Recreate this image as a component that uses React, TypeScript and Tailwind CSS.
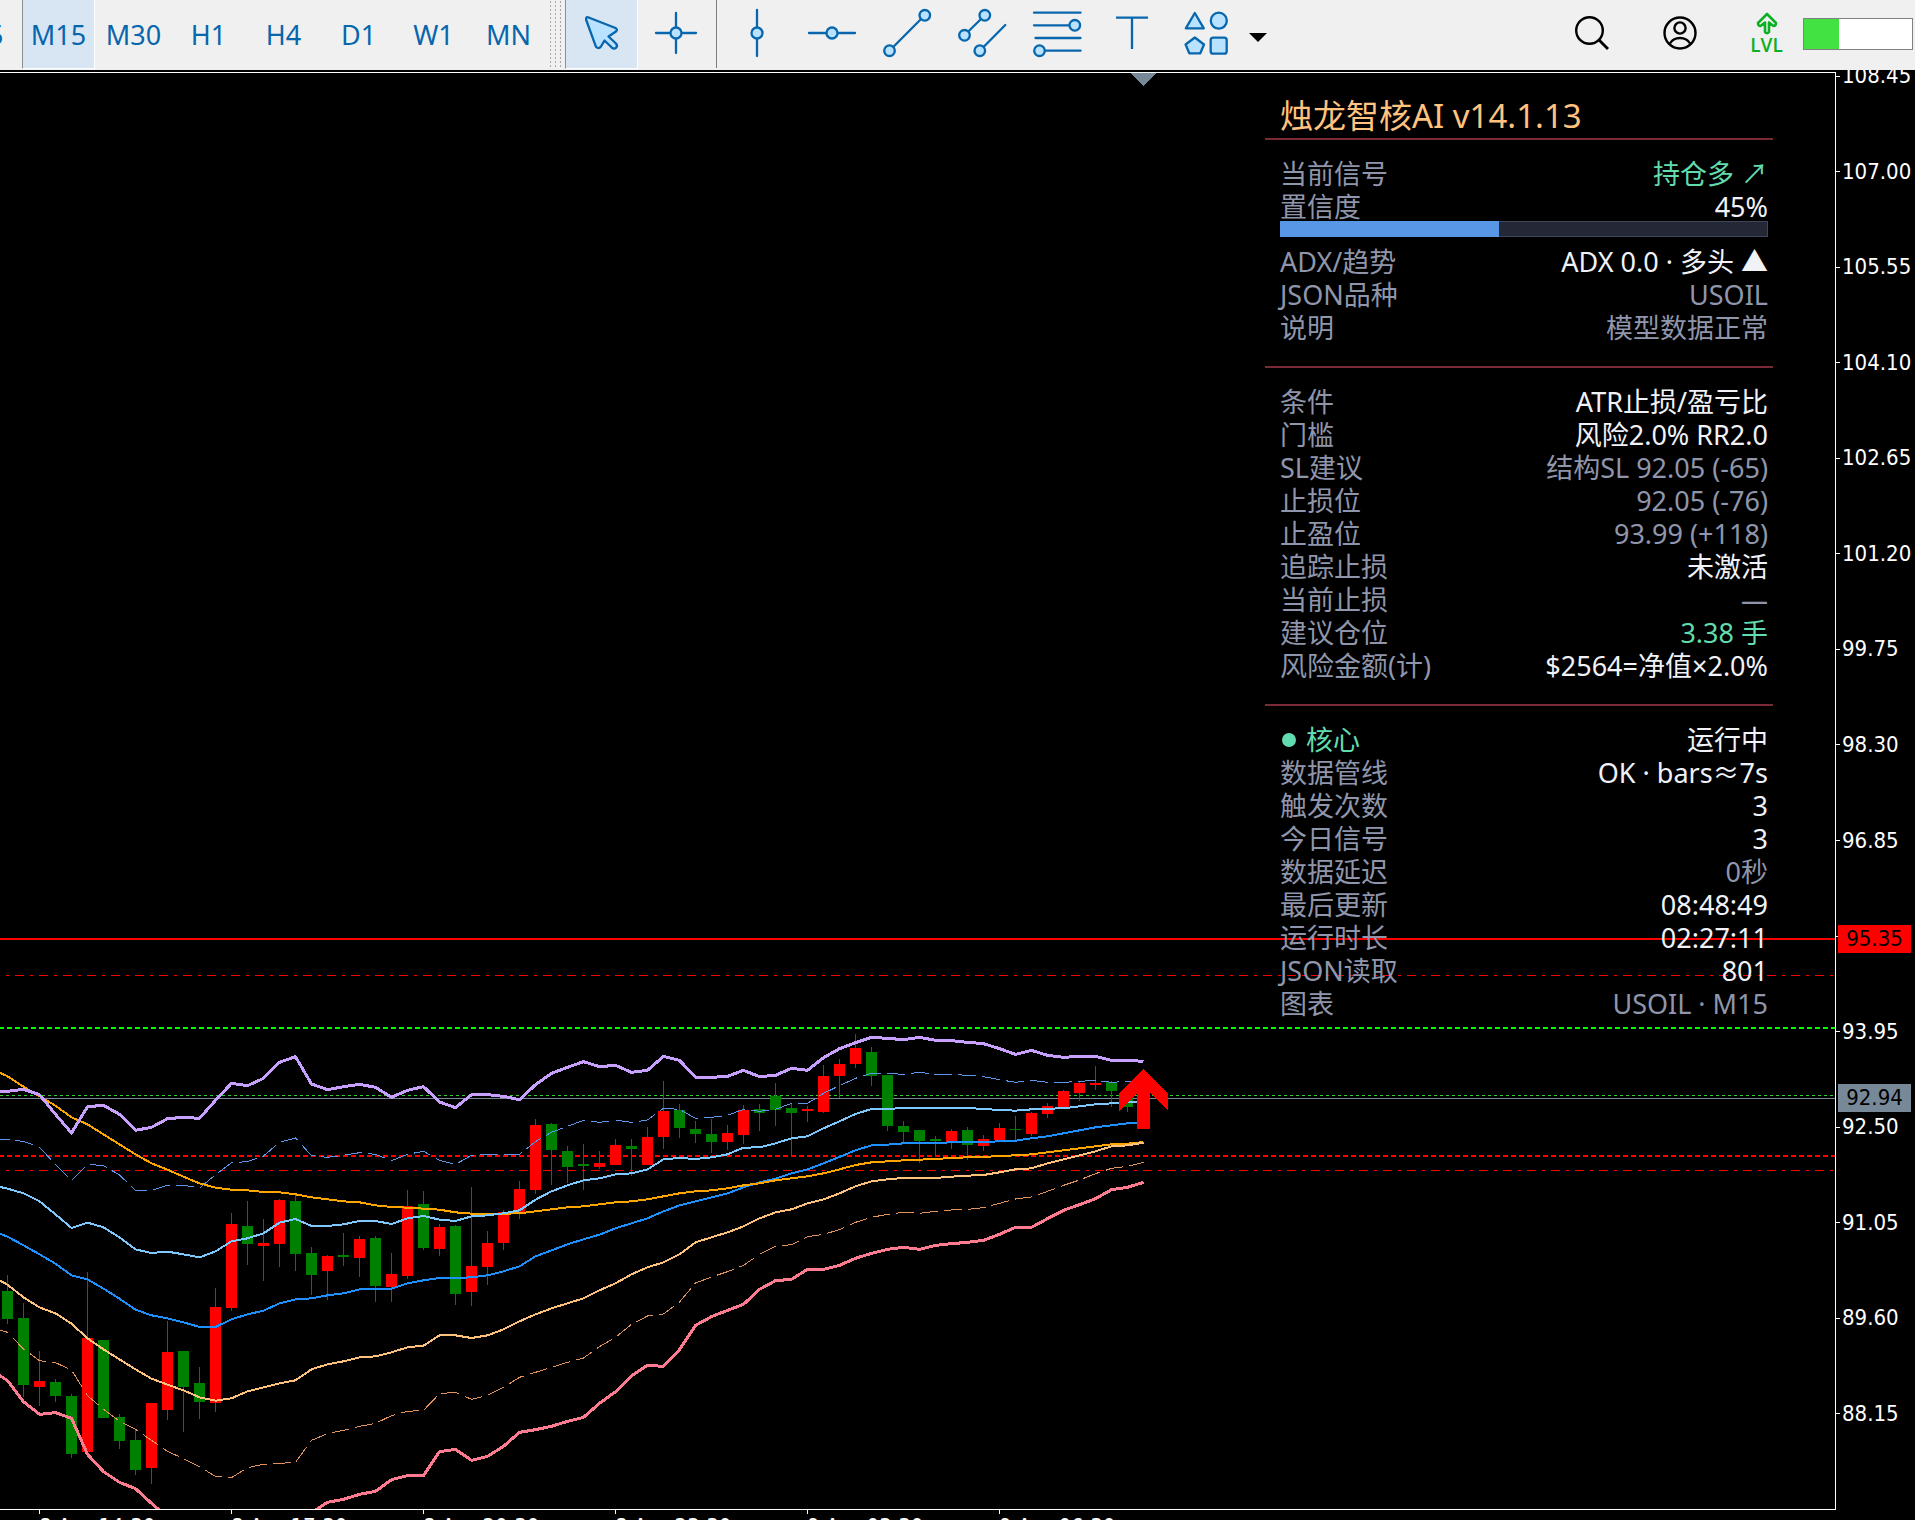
import type { ReactNode } from 'react'

const TIMEFRAMES = ['M5', 'M15', 'M30', 'H1', 'H4', 'D1', 'W1', 'MN']

// The blank entry keeps its tick, the ask price badge sits over it
const PRICES = [
  '108.45', '107.00', '105.55', '104.10', '102.65', '101.20', '99.75', '98.30',
  '96.85', '', '93.95', '92.50', '91.05', '89.60', '88.15',
]

const TIMES = ['8 Apr 14:30', '8 Apr 17:30', '8 Apr 20:30', '8 Apr 23:30', '9 Apr 03:30', '9 Apr 06:30']

type Tone = 'muted' | 'bright' | 'green'
type Row = { label: string; value: string; tone: Tone; dot?: boolean }

const TONES: Record<Tone, string> = {
  muted: 'text-[#8f96ab]',
  bright: 'text-[#f0f2f8]',
  green: 'text-[#62dcae]',
}

const SIGNAL_ROWS: Row[] = [
  { label: '当前信号', value: '持仓多 ↗', tone: 'green' },
  { label: '置信度', value: '45%', tone: 'bright' },
]

const TREND_ROWS: Row[] = [
  { label: 'ADX/趋势', value: 'ADX 0.0 · 多头 ▲', tone: 'bright' },
  { label: 'JSON品种', value: 'USOIL', tone: 'muted' },
  { label: '说明', value: '模型数据正常', tone: 'muted' },
]

const RISK_ROWS: Row[] = [
  { label: '条件', value: 'ATR止损/盈亏比', tone: 'bright' },
  { label: '门槛', value: '风险2.0% RR2.0', tone: 'bright' },
  { label: 'SL建议', value: '结构SL 92.05 (-65)', tone: 'muted' },
  { label: '止损位', value: '92.05 (-76)', tone: 'muted' },
  { label: '止盈位', value: '93.99 (+118)', tone: 'muted' },
  { label: '追踪止损', value: '未激活', tone: 'bright' },
  { label: '当前止损', value: '—', tone: 'muted' },
  { label: '建议仓位', value: '3.38 手', tone: 'green' },
  { label: '风险金额(计)', value: '$2564=净值×2.0%', tone: 'bright' },
]

const CORE_ROWS: Row[] = [
  { label: '核心', value: '运行中', tone: 'bright', dot: true },
  { label: '数据管线', value: 'OK · bars≈7s', tone: 'bright' },
  { label: '触发次数', value: '3', tone: 'bright' },
  { label: '今日信号', value: '3', tone: 'bright' },
  { label: '数据延迟', value: '0秒', tone: 'muted' },
  { label: '最后更新', value: '08:48:49', tone: 'bright' },
  { label: '运行时长', value: '02:27:11', tone: 'bright' },
  { label: 'JSON读取', value: '801', tone: 'bright' },
  { label: '图表', value: 'USOIL · M15', tone: 'muted' },
]

// Chart values are in thirds of a pixel below the 927px base line
const BASE_Y = 927
const STEP = 16
const FIRST_X = 7
const toY = (v: number) => BASE_Y + Math.round(v / 3)
const toX = (i: number) => FIRST_X + i * STEP

// [up, wick top, body top, body bottom, wick bottom]
const CANDLES: [number, number, number, number, number][] = [
  [0, 825, 873, 957, 971], [0, 909, 954, 1155, 1190], [1, 1053, 1143, 1161, 1217],
  [0, 1137, 1146, 1188, 1205], [0, 1182, 1188, 1362, 1373], [1, 816, 1014, 1356, 1370],
  [0, 1020, 1020, 1254, 1254], [0, 1242, 1251, 1323, 1346], [0, 1290, 1320, 1410, 1424],
  [1, 1209, 1209, 1404, 1451], [1, 963, 1056, 1230, 1259], [0, 1053, 1053, 1161, 1295],
  [0, 1101, 1149, 1206, 1256], [1, 864, 921, 1209, 1235], [1, 639, 672, 924, 932],
  [0, 603, 678, 732, 794], [1, 657, 729, 738, 842], [1, 597, 600, 732, 800],
  [0, 585, 603, 762, 812], [0, 741, 759, 825, 884], [1, 765, 768, 813, 899],
  [0, 699, 765, 771, 797], [1, 708, 717, 774, 830], [0, 708, 714, 858, 905],
  [1, 759, 822, 861, 905], [1, 570, 618, 828, 836], [0, 573, 612, 744, 749],
  [1, 672, 681, 747, 767], [0, 675, 678, 882, 914], [1, 561, 798, 876, 917],
  [1, 693, 729, 801, 854], [1, 630, 636, 729, 749], [1, 543, 567, 636, 656],
  [1, 357, 375, 570, 581], [0, 369, 372, 450, 554], [0, 438, 453, 501, 548],
  [0, 432, 492, 498, 569], [1, 453, 489, 501, 506], [1, 417, 435, 495, 495],
  [0, 417, 438, 447, 527], [1, 381, 411, 495, 495], [1, 243, 333, 411, 446],
  [0, 312, 330, 384, 413], [0, 363, 387, 402, 428], [0, 357, 402, 426, 458],
  [1, 375, 399, 426, 449], [1, 315, 330, 405, 431], [0, 312, 327, 339, 392],
  [0, 249, 288, 330, 377], [0, 309, 324, 339, 464], [1, 318, 327, 333, 365],
  [1, 195, 228, 336, 338], [1, 177, 192, 228, 293], [1, 102, 144, 192, 203],
  [0, 141, 156, 228, 257], [0, 225, 225, 378, 392], [0, 363, 378, 396, 431],
  [0, 390, 390, 423, 488], [0, 408, 417, 423, 464], [1, 387, 393, 429, 446],
  [0, 381, 390, 435, 479], [1, 405, 417, 438, 452], [1, 369, 384, 420, 420],
  [0, 348, 387, 390, 419], [1, 336, 339, 402, 407], [1, 309, 318, 342, 353],
  [1, 270, 273, 321, 321], [1, 246, 249, 279, 302], [1, 198, 249, 255, 269],
  [0, 243, 246, 273, 320], [0, 290, 294, 321, 335],
]

const SERIES: { color: string; width: number; dash?: string; values: number[] }[] = [
  {
    color: '#5b96e8',
    width: 1,
    dash: '18 6',
    values: [
      418, 419, 424, 442, 493, 541, 493, 497, 525, 571, 571, 556, 556, 564, 524, 488, 485, 468, 427,
      414, 467, 472, 466, 458, 463, 482, 463, 454, 481, 493, 466, 463, 463, 463, 425, 397, 379, 361,
      367, 360, 367, 360, 325, 328, 355, 352, 346, 328, 334, 328, 310, 310, 280, 257, 235, 220, 220,
      223, 217, 223, 223, 226, 230, 239, 247, 241, 247, 247, 244, 241, 247, 244, 244,
    ],
  },
  {
    color: '#e0935a',
    width: 1,
    dash: '18 6',
    values: [
      982, 997, 1047, 1082, 1088, 1110, 1187, 1228, 1264, 1288, 1321, 1354, 1376, 1400, 1429, 1433,
      1403, 1393, 1390, 1387, 1321, 1301, 1291, 1279, 1270, 1247, 1234, 1231, 1181, 1177, 1198, 1186,
      1162, 1132, 1117, 1102, 1087, 1074, 1040, 1012, 973, 948, 942, 906, 849, 831, 815, 796, 763,
      739, 734, 710, 703, 689, 667, 652, 643, 637, 640, 634, 630, 628, 623, 610, 597, 591, 574, 556,
      540, 521, 505, 499, 487,
    ],
  },
  {
    color: '#1e90ff',
    width: 2,
    values: [
      692, 710, 736, 763, 791, 826, 838, 866, 896, 929, 946, 955, 967, 981, 981, 958, 943, 932, 910,
      898, 895, 886, 880, 868, 867, 866, 850, 841, 834, 834, 832, 826, 814, 799, 769, 751, 733, 718,
      704, 685, 670, 655, 634, 616, 604, 592, 580, 562, 547, 536, 520, 508, 490, 471, 451, 436, 434,
      430, 429, 429, 427, 426, 426, 424, 422, 415, 409, 400, 391, 382, 376, 370, 367,
    ],
  },
  {
    color: '#ffa500',
    width: 2,
    values: [
      206, 229, 260, 289, 317, 352, 373, 403, 433, 463, 490, 509, 530, 550, 563, 569, 571, 576, 577,
      583, 592, 598, 604, 607, 616, 621, 623, 626, 629, 637, 641, 641, 641, 640, 634, 628, 622, 619,
      613, 607, 604, 598, 589, 580, 574, 571, 565, 556, 550, 541, 535, 529, 520, 508, 495, 487, 484,
      481, 479, 477, 474, 472, 471, 468, 466, 463, 457, 451, 445, 439, 433, 431, 426,
    ],
  },
  {
    color: '#7cc8ff',
    width: 2,
    values: [
      555, 566, 580, 604, 643, 684, 668, 682, 712, 748, 759, 755, 763, 772, 754, 724, 715, 700, 668,
      657, 678, 678, 673, 663, 663, 672, 655, 648, 659, 663, 649, 646, 640, 631, 599, 574, 556, 541,
      535, 523, 520, 508, 478, 474, 477, 472, 463, 443, 442, 430, 415, 409, 385, 364, 342, 327, 327,
      324, 324, 324, 324, 324, 327, 330, 332, 328, 326, 325, 319, 313, 310, 307, 305,
    ],
  },
  {
    color: '#ffc27c',
    width: 2,
    values: [
      829, 854, 892, 922, 940, 971, 1015, 1048, 1078, 1108, 1136, 1154, 1171, 1192, 1202, 1195, 1174,
      1162, 1150, 1141, 1108, 1093, 1084, 1072, 1069, 1057, 1042, 1037, 1006, 1006, 1014, 1006, 988,
      964, 943, 925, 910, 895, 871, 850, 823, 802, 787, 763, 727, 712, 697, 679, 655, 637, 628, 610,
      598, 580, 559, 544, 538, 534, 534, 534, 530, 527, 525, 517, 508, 505, 490, 478, 466, 454, 439,
      436, 428,
    ],
  },
  {
    color: '#c8a0ff',
    width: 3,
    values: [
      275, 274, 268, 284, 343, 399, 320, 316, 343, 391, 382, 356, 352, 355, 301, 250, 257, 235, 187,
      170, 252, 269, 260, 253, 262, 292, 271, 260, 306, 323, 284, 284, 289, 299, 254, 220, 202, 185,
      200, 196, 217, 211, 169, 181, 232, 232, 229, 211, 230, 226, 205, 211, 173, 146, 128, 112, 115,
      119, 112, 121, 122, 127, 131, 146, 163, 151, 166, 172, 169, 169, 181, 181, 184,
    ],
  },
  {
    color: '#ff7b90',
    width: 3,
    values: [
      1110, 1142, 1205, 1243, 1238, 1255, 1363, 1415, 1447, 1466, 1510, 1552, 1600, 1640, 1660, 1660,
      1640, 1620, 1580, 1560, 1538, 1507, 1498, 1483, 1474, 1439, 1427, 1427, 1355, 1348, 1381, 1369,
      1339, 1297, 1289, 1279, 1264, 1252, 1210, 1175, 1127, 1096, 1099, 1049, 976, 950, 931, 913, 868,
      842, 838, 808, 808, 796, 775, 760, 748, 742, 748, 736, 731, 727, 721, 703, 682, 682, 656, 631,
      614, 596, 569, 562, 547,
    ],
  },
]

const LEVELS: { y: number; color: string; width: number; dash?: string; from?: number }[] = [
  { y: 866, color: '#ff0000', width: 2 },
  { y: 902.5, color: '#ff0000', width: 1, dash: '9 6 3 6', from: -9 },
  { y: 955, color: '#00ff00', width: 2, dash: '5 3', from: -1 },
  { y: 1022.5, color: '#32cd32', width: 1, dash: '3 3' },
  { y: 1025.5, color: '#778899', width: 1 },
  { y: 1083, color: '#ff0000', width: 2, dash: '5 3', from: -1 },
  { y: 1097.5, color: '#ff0000', width: 1, dash: '9 6 3 6', from: -9 },
]

function Chart() {
  return (
    <svg className="absolute inset-0 h-full w-full" shapeRendering="crispEdges" aria-hidden="true">
      {LEVELS.map((l) => (
        <line
          key={l.y}
          x1={l.from ?? 0}
          x2="100%"
          y1={l.y}
          y2={l.y}
          stroke={l.color}
          strokeWidth={l.width}
          strokeDasharray={l.dash}
        />
      ))}
      {CANDLES.map(([up, high, top, bottom, low], i) => (
        <g key={i} fill={up ? '#ff0000' : '#008000'}>
          <rect x={toX(i)} y={toY(high)} width={1} height={toY(low) - toY(high)} />
          <rect x={toX(i) - 5} y={toY(top)} width={11} height={toY(bottom) - toY(top)} />
        </g>
      ))}
      {SERIES.map((s) => (
        <polyline
          key={s.color}
          points={s.values.map((v, i) => `${toX(i - 1) + 0.5},${BASE_Y + v / 3}`).join(' ')}
          fill="none"
          stroke={s.color}
          strokeWidth={s.width}
          strokeDasharray={s.dash}
          strokeLinejoin="round"
        />
      ))}
      <path d="M1143.5 996L1168 1020V1038L1150 1020V1056H1137V1020L1119 1038V1020Z" fill="#ff0000" />
      <path d="M1130 0H1156L1143 13Z" fill="#778899" />
    </svg>
  )
}

function InfoRows({ rows }: { rows: Row[] }) {
  return (
    <dl>
      {rows.map((row) => (
        <div key={row.label} className="flex justify-between leading-[33px]">
          {row.dot ? (
            <dt className="flex items-center gap-2.5 pl-0.5 text-[#62dcae]">
              <span className="size-3.5 rounded-full bg-[#62dcae]" />
              {row.label}
            </dt>
          ) : (
            <dt className={TONES.muted}>{row.label}</dt>
          )}
          <dd className={TONES[row.tone]}>{row.value}</dd>
        </div>
      ))}
    </dl>
  )
}

function InfoPanel() {
  return (
    <section className="absolute top-6 right-[62px] w-[508px] divide-y-2 divide-[#7b2935] text-[27px] whitespace-nowrap">
      <h1 className="pb-1 pl-[15px] text-[33px] leading-[37px] text-[#ffc27f]">烛龙智核AI v14.1.13</h1>
      <div className="pt-[17px] pr-[5px] pb-[22px] pl-[15px]">
        <InfoRows rows={SIGNAL_ROWS} />
        <div className="relative -mt-0.5 mb-2 h-4 border border-[#3f465c] bg-[#242836]">
          <div className="absolute -inset-y-px -left-px bg-[#5896e6]" style={{ width: '45%' }} />
        </div>
        <InfoRows rows={TREND_ROWS} />
      </div>
      <div className="pt-[17px] pr-[5px] pb-[22px] pl-[15px]">
        <InfoRows rows={RISK_ROWS} />
      </div>
      <div className="pt-[17px] pr-[5px] pl-[15px]">
        <InfoRows rows={CORE_ROWS} />
      </div>
    </section>
  )
}

function Tool({ label, active, children }: { label: string; active?: boolean; children: ReactNode }) {
  return (
    <button
      aria-label={label}
      className={`flex h-[69px] w-[73px] shrink-0 justify-center ${
        active ? 'border-r border-b border-l border-r-white border-b-white border-l-[#8f8f8f] bg-[#d8e5f2]' : ''
      }`}
    >
      <svg
        viewBox="-25 0 50 68"
        className="h-[68px] w-[50px]"
        fill="#b8e2ff"
        stroke="#0866ad"
        strokeWidth="2.3"
        strokeLinecap="round"
        strokeLinejoin="round"
      >
        {children}
      </svg>
    </button>
  )
}

function Toolbar() {
  return (
    <header className="flex h-[70px] shrink-0 items-start bg-[#f0f0f0]">
      <nav className="-ml-[53px] flex gap-[2px] text-[27px] text-[#0866ad]">
        {TIMEFRAMES.map((tf) => (
          <button
            key={tf}
            className={`h-[69px] w-[73px] pt-0.5 ${
              tf === 'M15'
                ? 'border-r border-b border-l border-r-white border-b-white border-l-[#8f8f8f] bg-[#d8e5f2]'
                : ''
            }`}
          >
            {tf}
          </button>
        ))}
      </nav>
      <div className="mx-[3px] h-[69px] w-[13px] bg-[radial-gradient(#a8a8a8_1px,transparent_1px)] bg-[size:5px_4px]" />
      <div className="ml-px flex gap-px">
        <Tool label="Cursor" active>
          <path d="M-14 17.3L13.5 28Q16 29.5 14 31.5L6.5 36.5L14 43.5Q16 46 14 47.8Q12 49.5 9.5 47.3L2.5 40.5L-1 46.5Q-3.5 49.5 -6 46.8L-15.8 20Q-16.3 16.8 -14 17.3Z" />
        </Tool>
        <Tool label="Crosshair">
          <path d="M0 13V53M-20 33H20" />
          <circle cx="0" cy="33" r="5.5" />
        </Tool>
      </div>
      <div className="mr-[3px] ml-1 h-[68px] w-px bg-[#7c7c7c]" />
      <div className="flex gap-[2px]">
        <Tool label="Vertical line">
          <path d="M0 10V56" />
          <circle cx="0" cy="33" r="5.5" />
        </Tool>
        <Tool label="Horizontal line">
          <path d="M-23 33H23" />
          <circle cx="0" cy="33" r="5.5" />
        </Tool>
        <Tool label="Trendline">
          <path d="M-17.5 50.7L17.8 15.3" />
          <circle cx="-17.5" cy="50.7" r="5.3" />
          <circle cx="17.8" cy="15.3" r="5.3" />
        </Tool>
        <Tool label="Equidistant channel">
          <path d="M-17.5 35.3L2.8 15.3M-2.2 50.7L23.3 25" />
          <circle cx="-17.5" cy="35.3" r="5.3" />
          <circle cx="2.8" cy="15.3" r="5.3" />
          <circle cx="-2.2" cy="50.7" r="5.3" />
        </Tool>
        <Tool label="Fibonacci retracement">
          <path d="M-23 12.7H23.5M-23 25.3H17M-21.5 38H23.5M-17 50.7H23.5" />
          <circle cx="17.8" cy="25.3" r="5.3" />
          <circle cx="-17.5" cy="50.7" r="5.3" />
        </Tool>
        <Tool label="Text">
          <path d="M-16 17.7H16M0 17.7V49" strokeLinecap="butt" />
        </Tool>
        <Tool label="Shapes">
          <path d="M-12.2 13L-3.2 28.3H-21.2Z" />
          <circle cx="11.8" cy="20.7" r="8" />
          <path d="M-12.2 37.5L-3 44.5L-6.7 53.3H-17.7L-21.4 44.5Z" />
          <rect x="3.7" y="37.7" width="16" height="16" rx="2.5" />
        </Tool>
      </div>
      <button aria-label="More shapes" className="flex h-[69px] w-[30px] items-center justify-center pt-1.5">
        <svg viewBox="0 0 18 9" className="h-[9px] w-[18px]">
          <path d="M0 0H18L9 9Z" />
        </svg>
      </button>

      <div className="ml-auto flex items-center pr-[2px]">
        <button aria-label="Search" className="flex h-[68px] w-[87px] justify-center">
          <svg viewBox="-20 0 40 68" className="h-[68px] w-10" fill="none" stroke="#000" strokeWidth="2.4">
            <circle cx="-3.5" cy="30.5" r="13.3" />
            <path d="M6 40L15 49" strokeWidth="2.8" />
          </svg>
        </button>
        <button aria-label="Account" className="flex h-[68px] w-[87px] justify-center">
          <svg viewBox="-20 0 40 68" className="h-[68px] w-10" fill="none" stroke="#000" strokeWidth="2.4">
            <circle cx="0" cy="33" r="15.5" />
            <circle cx="0" cy="28" r="5.6" />
            <path d="M-10.5 44Q-7 38 0 38T10.5 44" />
          </svg>
        </button>
        <button
          aria-label="Level"
          className="flex h-[68px] w-[87px] flex-col items-center pt-3 font-['Open_Sans',sans-serif] text-[19px] leading-5 font-semibold text-[#0cb023]"
        >
          <svg viewBox="0 0 22 23" className="h-[23px] w-[22px]" fill="none" stroke="currentColor" strokeWidth="2.6" strokeLinejoin="round">
            <path d="M11 2L20 11Q20 14 17.5 14L13 10.5V20Q11 22.5 9 20V10.5L4.5 14Q2 14 2 11Z" />
          </svg>
          LVL
        </button>
        <div className="-ml-[7px] h-8 w-[110px] border border-[#808080] bg-white">
          <div className="h-full bg-[#41e241]" style={{ width: '32%' }} />
        </div>
      </div>
    </header>
  )
}

export default function App() {
  return (
    <div className="flex h-screen flex-col overflow-hidden bg-black font-['Noto_Sans','Noto_Sans_CJK_SC',sans-serif]">
      <Toolbar />
      <main className="flex min-h-0 flex-1 font-normal">
        <div className="flex min-w-0 flex-1 flex-col">
          <div className="relative mt-[2px] min-h-0 flex-1 overflow-hidden border-t border-r border-b border-white">
            <Chart />
            <InfoPanel />
          </div>
          <div className="flex h-2.5 shrink-0 overflow-hidden pl-[39px] font-['DejaVu_Sans_Condensed','DejaVu_Sans',sans-serif] text-[22px] leading-[26px] text-white">
            {TIMES.map((t) => (
              <div key={t} className="w-48 shrink-0 whitespace-nowrap">
                <div className="h-1 w-px bg-white" />
                {t}
              </div>
            ))}
          </div>
        </div>

        <aside className="relative w-[79px] shrink-0 overflow-hidden font-['DejaVu_Sans_Condensed','DejaVu_Sans',sans-serif] text-[22px] leading-7 text-white">
          <ol className="-mt-2 flex h-full flex-col justify-between pb-[84px]">
            {PRICES.map((p, i) => (
              <li key={i} className="flex min-h-7 items-center gap-0.5">
                <span className="h-px w-1 bg-white" />
                {p}
              </li>
            ))}
          </ol>
          <span className="absolute top-[855px] left-[2px] w-[73px] bg-[#ff0000] text-center text-black">95.35</span>
          <span className="absolute top-[1014px] left-[2px] w-[73px] bg-[#778899] text-center text-black">92.94</span>
        </aside>
      </main>
    </div>
  )
}
